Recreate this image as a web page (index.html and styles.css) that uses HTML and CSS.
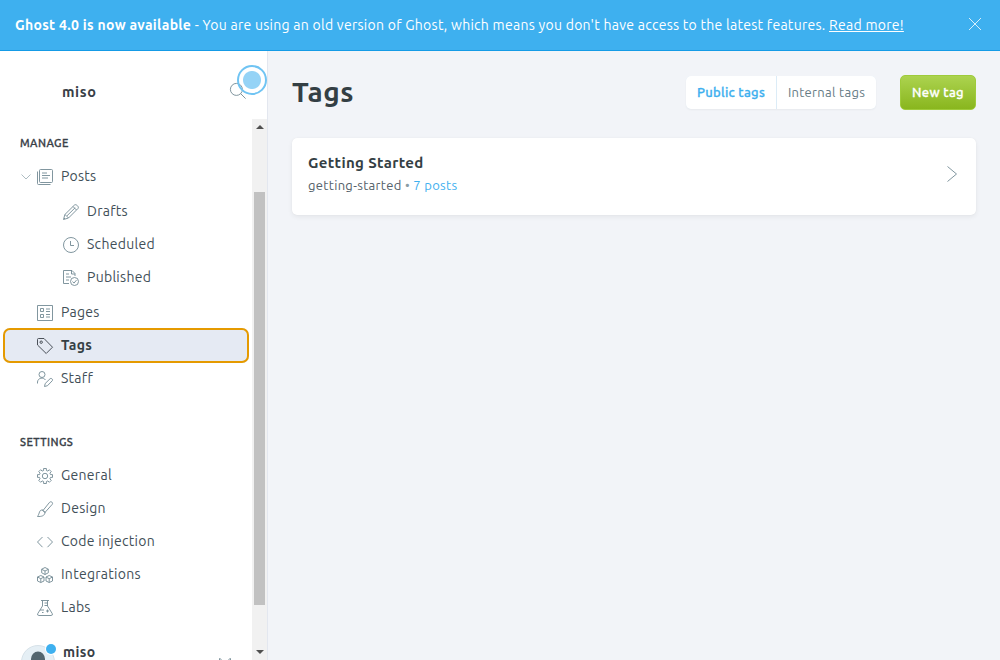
FILE: index.html
```html
<!DOCTYPE html>
<html lang="en">
<head>
<meta charset="utf-8">
<title>Tags</title>
<link rel="stylesheet" href="styles.css">
</head>
<body>
<div class="app">
  <header class="banner">
    <p class="banner-text"><strong class="banner-strong">Ghost 4.0 is now available</strong> <span class="banner-copy">- You are using an old version of Ghost, which means you don't have access to the latest features.</span> <a class="banner-link">Read more!</a></p>
    <svg class="close" viewBox="0 0 12 12"><path d="M0 0l12 12M12 0L0 12"/></svg>
  </header>
  <div class="body">
    <aside class="sidebar">
      <div class="site">
        <span class="site-name">miso</span>
        <svg class="search" viewBox="0 0 16 16"><circle cx="6.4" cy="6.4" r="6"/><path d="M10.7 10.7L15.6 15.6"/></svg>
        <span class="beacon"></span>
      </div>
      <div class="scroller">
        <nav class="nav">
          <h2 class="group">MANAGE</h2>
          <a class="item"><svg class="caret" viewBox="0 0 10 6"><path d="M.5 .5L5 5 9.500 .5"/></svg><svg class="icon" viewBox="0 0 16 16"><path d="M3.500 .5h11q1 0 1 1v11q0 1-1 1h-11q-1 0-1-1v-11q0-1 1-1zM.5 2.500V14.500q0 1 1 1H13.500M5 4h5M5 6.500h8M5 9h6"/></svg><span class="label">Posts</span></a>
          <div class="sub">
            <a class="item"><svg class="icon" viewBox="0 0 16 16"><path d="M.5 15.500l1.400-5L11.500 1c1.300-1.300 5 1.700 3.500 3.500L5.500 14zM2 10.500L5.500 14M10 2.500L13.500 6M4 11.800L12.200 3.700M1 14l1 1"/></svg><span class="label">Drafts</span></a>
            <a class="item"><svg class="icon" viewBox="0 0 16 16"><circle cx="8" cy="8" r="7.500"/><path d="M7.500 4v4.500H11"/></svg><span class="label">Scheduled</span></a>
            <a class="item"><svg class="icon" viewBox="0 0 16 16"><path d="M6 13.500H.5V.5H9l3 3V6M8.500 .5V4H12M3 4h3M3 7h5M3 10h3"/><circle cx="11.500" cy="11.500" r="4"/><path d="M9.500 11.500l1.500 1.600 2.500-3"/></svg><span class="label">Published</span></a>
          </div>
          <a class="item"><svg class="icon" viewBox="0 0 16 16"><path d="M.5 .5h15v15H.5zM3.500 3.500h3v3h-3zM3.500 9.500h3v3h-3zM9 4h4M9 6.500h4M9 9.500h4M9 12h4"/></svg><span class="label">Pages</span></a>
          <a class="item active"><svg class="icon" viewBox="0 0 16 16"><path d="M.5 1.500q0-1 1-1H7L15.500 9.200 9.200 15.500.5 7z"/><circle cx="4.200" cy="4.200" r="1.200"/></svg><span class="label">Tags</span></a>
          <a class="item"><svg class="icon" viewBox="0 0 16 16"><circle cx="5" cy="3.500" r="3"/><path d="M.5 12.500V11c.5-4.500 6-5 8-2M7.500 15.500l.7-3 4.800-4.700c1.200-1.200 3.500.7 2.200 2L10.500 14.700z"/></svg><span class="label">Staff</span></a>
          <h2 class="group second">SETTINGS</h2>
          <a class="item"><svg class="icon" viewBox="0 0 16 16"><circle cx="8" cy="8" r="2.700"/><path stroke-linejoin="round" d="M6.600 2.500V.5h2.800v2l1.500.6 1.400-1.400 2 2-1.400 1.400.6 1.500h2v2.800h-2l-.6 1.500 1.400 1.400-2 2-1.400-1.400-1.500.6v2H6.600v-2l-1.500-.6-1.400 1.400-2-2 1.400-1.400-.6-1.500h-2V6.600h2l.6-1.500-1.400-1.400 2-2 1.400 1.400z"/></svg><span class="label">General</span></a>
          <a class="item"><svg class="icon" viewBox="0 0 16 16"><path d="M6 9.500L12.500 1.400c1.500-1.700 4 .3 2.700 2L8.100 11.300M5.200 8.800l3.500 3M5.200 9C2 8.800 2.800 12.500.5 15.500c4 .2 7.500-.7 7.300-4.200z"/></svg><span class="label">Design</span></a>
          <a class="item"><svg class="icon" viewBox="0 0 16 16"><path d="M5.500 3L.5 8 5.500 13.200M10.500 3l5 5L10.500 13.200"/></svg><span class="label">Code injection</span></a>
          <a class="item"><svg class="icon" viewBox="0 0 16 16"><path d="M8 .5l3.300 1.700v3.600L8 7.500 4.700 5.800V2.200zM4.700 2.300L8 4l3.300-1.700M8 4v3.500M3.800 8.500L7 10v4l-3.200 1.500L.5 14v-4zM.5 10l3.300 1.700L7 10M3.800 11.700v3.800M12.200 8.500L15.500 10v4l-3.300 1.500L9 14v-4zM9 10l3.200 1.700 3.300-1.700M12.200 11.700v3.800"/></svg><span class="label">Integrations</span></a>
          <a class="item"><svg class="icon" viewBox="0 0 16 16"><path d="M4 .5h8M5.500 .5V6L.8 13.500q-.8 2 1 2h12.400q1.800 0 1-2L10.500 6V.5M7.500 3h3M7.500 5.500h3M3 10h4M10.500 9.500v3M9 11h3M5 12.500h1.500"/></svg><span class="label">Labs</span></a>
        </nav>
        <div class="user">
          <span class="avatar"><svg viewBox="0 0 34 34"><circle class="face" cx="17" cy="17" r="16.500"/><ellipse class="person" cx="17" cy="14" rx="7" ry="7.500"/><path class="person" d="M5 30q12-16 24 0z"/></svg><i class="dot"></i></span>
          <span class="user-name">miso</span>
          <svg class="gear" viewBox="0 0 16 16"><path d="M2.500 2V.5l2 1M13.500 2V.5l-2 1"/></svg>
        </div>
      </div>
      <div class="scrollbar"><i class="arrow up"></i><i class="thumb"></i><i class="arrow down"></i></div>
    </aside>
    <main class="main">
      <div class="head">
        <h1 class="title">Tags</h1>
        <div class="tabs"><span class="tab on"><span class="tab-text">Public tags</span></span><span class="tab"><span class="tab-text">Internal tags</span></span></div>
        <button class="new"><span class="new-text">New tag</span></button>
      </div>
      <section class="card">
        <div>
          <h3 class="name">Getting Started</h3>
          <p class="meta"><span class="slug">getting-started</span> <span class="bullet">•</span> <a class="count">7 posts</a></p>
        </div>
        <svg class="chevron" viewBox="0 0 10 16"><path d="M.5 .5L9.500 8 .5 15.500"/></svg>
      </section>
    </main>
  </div>
</div>
</body>
</html>
```
FILE: styles.css
```css
* { box-sizing: border-box; }
body { margin: 0; font-family: Ubuntu, "Noto Sans", sans-serif; color: #394047; font-size: 14px; letter-spacing: .28px; }
h1, h2, h3, p { margin: 0; }
svg { fill: none; stroke: #738a94; stroke-width: .9; flex: none; overflow: visible; }
.app { height: 660px; display: flex; flex-direction: column; overflow: hidden; }
.banner { height: 51px; flex: none; display: flex; align-items: center; justify-content: space-between; padding: 0 19px 0 15px; background: #3eb0ef; border-bottom: 1px solid #159be6; color: #fff; white-space: nowrap; }
.banner-text { line-height: 20px; letter-spacing: .27px; }
.banner-strong { letter-spacing: .3px; }
.banner-link { text-decoration: underline; }
.close { width: 12px; height: 12px; stroke: #fff; stroke-width: .8; margin-top: -2px; }
.body { flex: 1; display: flex; min-height: 0; }
.sidebar { width: 268px; flex: none; display: grid; grid-template: 68px 1fr / 252px 15px; background: #fff; border-right: 1px solid #e3e7ef; }
.site { grid-column: 1 / 3; position: relative; display: flex; align-items: center; justify-content: space-between; padding: 12px 21px 0 62px; }
.site-name { font-weight: 700; font-size: 14.500px; line-height: 20px; margin-top: 2px; letter-spacing: .6px; }
.search { width: 16px; height: 16px; }
.beacon { position: absolute; left: 237px; top: 14px; width: 30px; height: 30px; border: 2px solid #70c4f3; border-radius: 50%; background: radial-gradient(circle, #95d3f6 8.500px, transparent 9.500px); }
.scroller { overflow: hidden; min-width: 0; padding-top: 14px; }
.group { font-size: 11px; line-height: 20px; font-weight: 500; -webkit-text-stroke: .3px; letter-spacing: .45px; padding-left: 20px; margin-bottom: 7px; }
.second { margin: 37px 0 7px; }
.item { position: relative; display: flex; align-items: center; gap: 8px; height: 33px; padding: 0 0 2px 37px; }
.label { line-height: 20px; color: #424f58; white-space: nowrap; }
.icon { width: 16px; height: 16px; margin-top: 2px; }
.caret { position: absolute; left: 21px; top: 14px; width: 10px; height: 6px; stroke: #a5b4bb; }
.sub { padding: 2px 0 2px 26px; }
.active { margin: -1px 3px; padding-left: 34px; background: #e5eaf3; border-radius: 7px; box-shadow: inset 0 0 0 2px #e59a00; height: 35px; }
.active .label { font-weight: 700; color: #343f44; }
.active .icon { stroke: #394047; }
.user { display: flex; align-items: flex-start; margin-top: 20px; padding: 0 19px 0 21px; }
.avatar { position: relative; width: 34px; height: 34px; display: block; margin-top: 1px; }
.face { fill: #e5eff5; stroke: #d4dfe7; }
.person { fill: #54666f; stroke: none; }
.dot { position: absolute; right: -1px; top: -1px; width: 10px; height: 10px; border-radius: 50%; background: #3eb0ef; box-shadow: 0 0 0 1px #fff; }
.user-name { margin-left: 8px; font-weight: 700; line-height: 20px; margin-top: -2px; flex: 1; letter-spacing: .4px; }
.gear { width: 16px; height: 16px; margin-top: 14px; }
.scrollbar { background: #f1f1f1; display: flex; flex-direction: column; align-items: center; }
.thumb { width: 11px; height: 413px; background: #c1c1c1; margin-top: 63px; }
.arrow { border: 4px solid transparent; border-top-width: 0; border-bottom-color: #505050; }
.up { margin-top: 6px; }
.down { border-width: 4px 4px 0; border-color: #505050 transparent; margin-top: 45px; }
.main { flex: 1; background: #f2f4f8; padding: 24px 24px 0; }
.head { display: flex; align-items: center; height: 35px; }
.title { font-size: 28px; line-height: 36px; font-weight: 700; flex: 1; color: #343f44; letter-spacing: .5px; margin-top: -2px; }
.tabs { display: flex; gap: 1px; height: 33px; margin-right: 24px; background: #dcecf7; border-radius: 5px; overflow: hidden; box-shadow: 0 1px 2px #0000000c; }
.tab { width: 99px; background: #fff; display: grid; place-items: center; padding-bottom: 2px; font-size: 13px; letter-spacing: .3px; color: #667b85; white-space: nowrap; }
.on { width: 90px; color: #3eb0ef; font-weight: 500; -webkit-text-stroke: .3px; }
.new { width: 76px; height: 35px; border: 1px solid #9fcb3b; border-radius: 5px; background: linear-gradient(#acd34f, #89b61e); color: #fff; font: 500 13px Ubuntu, "Noto Sans", sans-serif; -webkit-text-stroke: .3px; letter-spacing: .35px; padding: 0 0 2px; white-space: nowrap; }
.card { height: 77px; margin-top: 28px; padding: 0 19px 0 16px; background: #fff; border-radius: 5px; box-shadow: 0 0 1px #00000014, 0 2px 5px #0000000f; display: flex; justify-content: space-between; }
.name { font-size: 15px; line-height: 20px; font-weight: 700; margin-top: 15px; color: #343f44; letter-spacing: .36px; }
.meta { font-size: 13px; line-height: 20px; margin-top: 2px; white-space: nowrap; color: #546169; letter-spacing: .32px; }
.bullet { color: #8a9ca5; }
.count { color: #3eb0ef; }
.chevron { width: 10px; height: 16px; margin-top: 28px; }
```
